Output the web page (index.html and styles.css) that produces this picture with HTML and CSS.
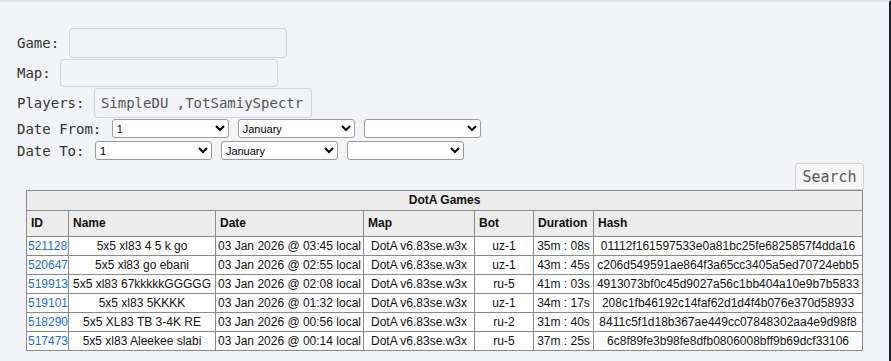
FILE: index.html
```html
<!DOCTYPE html>
<html lang="en">
<head>
    <meta charset="UTF-8">
    <title>DotA Games</title>
    <link rel="stylesheet" href="styles.css">
</head>
<body>
    <div class="page">
        <form class="filters">
            <div class="row"><label>Game:</label> <input class="field field-game" type="text"></div>
            <div class="row"><label>Map:</label> <input class="field field-map" type="text"></div>
            <div class="row"><label>Players:</label> <input class="field field-players" type="text" value="SimpleDU ,TotSamiySpectr"></div>
            <div class="row date-row"><label>Date From:</label>
                <select class="pick"><option>1</option></select>
                <select class="pick"><option>January</option></select>
                <select class="pick"><option></option></select>
            </div>
            <div class="row date-row"><label>Date To:</label>
                <select class="pick"><option>1</option></select>
                <select class="pick"><option>January</option></select>
                <select class="pick"><option></option></select>
            </div>
        </form>
        <div class="results">
            <div class="search-bar"><button class="search-btn" type="button">Search</button></div>
            <table class="games">
                <colgroup>
                    <col style="width:42px"><col style="width:147px"><col style="width:148px"><col style="width:111px"><col style="width:59px"><col style="width:60px"><col style="width:269px">
                </colgroup>
                <tr><th class="caption" colspan="7">DotA Games</th></tr>
                <tr class="head"><th>ID</th><th>Name</th><th>Date</th><th>Map</th><th>Bot</th><th>Duration</th><th>Hash</th></tr>
                <tr><td><a href="#">521128</a></td><td>5x5 xl83 4 5 k go</td><td>03 Jan 2026 @ 03:45 local</td><td>DotA v6.83se.w3x</td><td>uz-1</td><td>35m : 08s</td><td>01112f161597533e0a81bc25fe6825857f4dda16</td></tr>
                <tr><td><a href="#">520647</a></td><td>5x5 xl83 go ebani</td><td>03 Jan 2026 @ 02:55 local</td><td>DotA v6.83se.w3x</td><td>uz-1</td><td>43m : 45s</td><td>c206d549591ae864f3a65cc3405a5ed70724ebb5</td></tr>
                <tr><td><a href="#">519913</a></td><td>5x5 xl83 67kkkkkGGGGG</td><td>03 Jan 2026 @ 02:08 local</td><td>DotA v6.83se.w3x</td><td>ru-5</td><td>41m : 03s</td><td>4913073bf0c45d9027a56c1bb404a10e9b7b5833</td></tr>
                <tr><td><a href="#">519101</a></td><td>5x5 xl83 5KKKK</td><td>03 Jan 2026 @ 01:32 local</td><td>DotA v6.83se.w3x</td><td>uz-1</td><td>34m : 17s</td><td>208c1fb46192c14faf62d1d4f4b076e370d58933</td></tr>
                <tr><td><a href="#">518290</a></td><td>5x5 XL83 TB 3-4K RE</td><td>03 Jan 2026 @ 00:56 local</td><td>DotA v6.83se.w3x</td><td>ru-2</td><td>31m : 40s</td><td>8411c5f1d18b367ae449cc07848302aa4e9d98f8</td></tr>
                <tr><td><a href="#">517473</a></td><td>5x5 xl83 Aleekee slabi</td><td>03 Jan 2026 @ 00:14 local</td><td>DotA v6.83se.w3x</td><td>ru-5</td><td>37m : 25s</td><td>6c8f89fe3b98fe8dfb0806008bff9b69dcf33106</td></tr>
            </table>
        </div>
    </div>
</body>
</html>
```
FILE: styles.css
```css
html, body {
    margin: 0;
    padding: 0;
    background: #f2f3f7;
}
.page {
    box-sizing: border-box;
    min-height: 100vh;
    border-top: 2px solid #e2e3e8;
    border-right: 2px solid #1f1f28;
    padding: 26px 0 0 17px;
    color: #333333;
}
.filters {
    font-family: "DejaVu Sans Mono", monospace;
    font-size: 14px;
}
.row {
    display: flex;
    align-items: center;
    white-space: pre;
    margin-bottom: 1px;
}
.row label::after {
    content: ' ';
}
.field {
    box-sizing: border-box;
    width: 218px;
    height: 30px;
    margin: 0 0 0 1px;
    background: #f2f3f7;
    border: 1px solid #d3d4d9;
    border-radius: 4px;
    padding: 0 6px;
    font-family: "DejaVu Sans Mono", monospace;
    font-size: 14px;
    color: #555555;
}
.field-map {
    height: 28px;
}
.date-row {
    margin-bottom: 3px;
}
.pick {
    box-sizing: border-box;
    width: 117px;
    height: 19px;
    margin: 0 9px 0 0;
    background: #ffffff;
    border: 1px solid #9a9a9a;
    border-radius: 3px;
    font-family: "Liberation Sans", Arial, sans-serif;
    font-size: 11px;
    color: #000000;
}
.pick:first-of-type {
    margin-left: 2px;
}
.results {
    width: 838px;
    margin: 0 0 0 9px;
}
.search-bar {
    display: flex;
    justify-content: flex-end;
}
.search-btn {
    width: 69px;
    height: 27px;
    background: #f6f6f6;
    border: 1px solid #cfcfcf;
    border-radius: 3px;
    font-family: "DejaVu Sans Mono", monospace;
    font-size: 15px;
    color: #5a5a5a;
    padding: 0;
}
.games {
    width: 836px;
    table-layout: fixed;
    border-collapse: collapse;
    background: #ffffff;
    font-family: "Liberation Sans", Arial, sans-serif;
    font-size: 12px;
    color: #111111;
}
.games th, .games td {
    border: 1px solid #8a8a8a;
    line-height: 14px;
    white-space: nowrap;
    overflow: hidden;
}
.games td {
    padding: 2px 1px;
    text-align: center;
}
.games th {
    background: #ececec;
    text-align: left;
    padding: 5px 4px 6px;
}
.games th.caption {
    text-align: center;
    padding: 2px 4px 3px;
}
.games a {
    color: #196ed2;
    text-decoration: none;
}
```
